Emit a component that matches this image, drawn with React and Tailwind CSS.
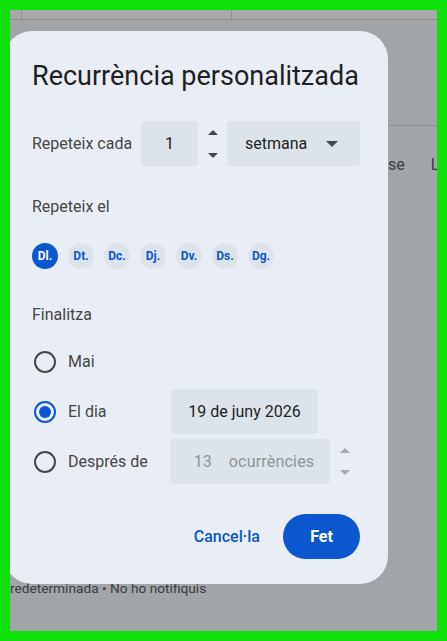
import React from "react";

const font = { fontFamily: "Roboto, 'Noto Sans', sans-serif" };

function Up({ className }) {
  return (
    <svg width="10" height="5" viewBox="0 0 10 5" className={className}>
      <path d="M0 5 L5 0 L10 5 Z" fill="currentColor" />
    </svg>
  );
}
function Down({ className }) {
  return (
    <svg width="10" height="5" viewBox="0 0 10 5" className={className}>
      <path d="M0 0 L5 5 L10 0 Z" fill="currentColor" />
    </svg>
  );
}

function Radio({ checked }) {
  return (
    <div
      className={
        "w-[22px] h-[22px] rounded-full border-2 flex items-center justify-center " +
        (checked ? "border-[#0b57d0]" : "border-[#444746]")
      }
    >
      {checked && <div className="w-[12px] h-[12px] rounded-full bg-[#0b57d0]" />}
    </div>
  );
}

export default function App() {
  const days = ["Dl.", "Dt.", "Dc.", "Dj.", "Dv.", "Ds.", "Dg."];
  return (
    <div className="w-[447px] h-[641px] bg-[#0ee10a] p-[10px]" style={font}>
      <div className="relative w-full h-full bg-[#a1a5a8] overflow-hidden flex flex-col">
        <div className="h-[10px] flex bg-[#a9a7a7] border-b border-[#8c8e90] shrink-0">
          <div className="w-[12px] border-r border-[#8c8e90]" />
          <div className="w-[210px] border-r border-[#8c8e90]" />
        </div>
        <div className="ml-[378px] mt-[105px] border-t border-[#8c8e90] flex gap-[26px] pt-[29px] text-[16px] text-[#3a3c3e] leading-[20px] whitespace-nowrap">
          <span>se</span>
          <span>L</span>
        </div>
        <div className="mt-auto mb-[33px] text-[13.7px] leading-[20px] text-[#3a3c3e] whitespace-nowrap">
          redeterminada • No ho notifiquis
        </div>

        <div className="absolute left-[-6px] top-[21px] w-[384px] h-[553px] bg-[#e9eef6] rounded-[28px] px-[28px] pt-[29px] flex flex-col">
          <div className="text-[27px] leading-[32px] text-[#1f1f1f] whitespace-nowrap">Recurrència personalitzada</div>

          <div className="mt-[29px] flex items-center h-[45px]">
            <div className="w-[109px] text-[16px] text-[#444746]">Repeteix cada</div>
            <div className="w-[57px] h-[45px] rounded-[4px] bg-[#dde3ea] flex items-center justify-center text-[16px] text-[#1f1f1f]">
              1
            </div>
            <div className="w-[29px] h-[45px] flex flex-col items-center justify-center gap-[18px] text-[#444746]">
              <Up />
              <Down />
            </div>
            <div className="w-[133px] h-[45px] rounded-[4px] bg-[#dde3ea] flex items-center pl-[18px] pr-[22px] text-[16px] text-[#1f1f1f]">
              <span className="flex-1">setmana</span>
              <svg width="12" height="6" viewBox="0 0 12 6">
                <path d="M0 0 L6 6 L12 0 Z" fill="#444746" />
              </svg>
            </div>
          </div>

          <div className="mt-[29px] text-[16px] leading-[24px] text-[#444746]">Repeteix el</div>

          <div className="mt-[24px] flex gap-[10px]">
            {days.map((d, i) => (
              <div
                key={d}
                className={
                  "w-[26px] h-[26px] rounded-full flex items-center justify-center text-[12px] font-bold " +
                  (i === 0 ? "bg-[#0b57d0] text-white" : "bg-[#dde3ea] text-[#0b57d0]")
                }
              >
                {d}
              </div>
            ))}
          </div>

          <div className="mt-[34px] text-[16px] leading-[24px] text-[#444746]">Finalitza</div>

          <div className="mt-[12px] flex flex-col gap-[5px] text-[16px] text-[#444746]">
            <div className="h-[45px] flex items-center">
              <div className="w-[139px] flex items-center gap-[12px] pl-[2px]">
                <Radio />
                <span>Mai</span>
              </div>
            </div>
            <div className="h-[45px] flex items-center">
              <div className="w-[139px] flex items-center gap-[12px] pl-[2px]">
                <Radio checked />
                <span>El dia</span>
              </div>
              <div className="w-[147px] h-[45px] rounded-[4px] bg-[#dde3ea] flex items-center justify-center text-[16px] text-[#1f1f1f]">
                19 de juny 2026
              </div>
            </div>
            <div className="h-[45px] flex items-center">
              <div className="w-[139px] flex items-center gap-[12px] pl-[2px]">
                <Radio />
                <span>Després de</span>
              </div>
              <div className="w-[162px] h-[45px] rounded-[4px] bg-[#dde3ea] flex items-center text-[16px] text-[#8f9499]">
                <span className="pl-[24px] w-[59px]">13</span>
                <span className="tracking-[0.2px]">ocurrències</span>
              </div>
              <div className="w-[30px] h-[45px] flex flex-col items-center justify-center gap-[17px] text-[#a6abb0]">
                <Up />
                <Down />
              </div>
            </div>
          </div>

          <div className="mt-[30px] flex justify-end items-center gap-[23px]">
            <button className="text-[16px] font-medium text-[#0b57d0]">Cancel·la</button>
            <button className="w-[77px] h-[45px] rounded-full bg-[#0b57d0] text-white text-[16px] font-bold">
              Fet
            </button>
          </div>
        </div>
      </div>
    </div>
  );
}
